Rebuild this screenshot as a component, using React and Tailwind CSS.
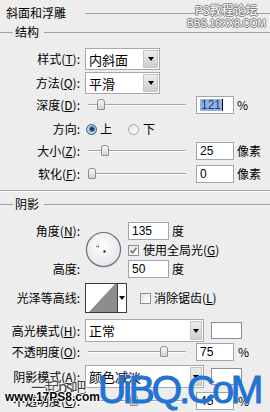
import React from 'react';

function Label({ children }) {
  return (
    <div className="w-[80px] shrink-0 whitespace-nowrap text-right text-[12px] leading-none">{children}</div>
  );
}

function Slider({ thumb }) {
  return (
    <div className="relative ml-[8px] h-[12px] w-[98px] shrink-0">
      <div className="absolute inset-x-0 top-[5px] h-[2px] border-t border-b border-[#a3a3a3] border-b-[#ffffff]" />
      <div className={`absolute top-0 h-[11px] w-[8px] rounded-t-[3px] rounded-b-[1px] border border-[#8e8e8e] bg-gradient-to-b from-[#fbfbfb] to-[#d2d2d2] ${thumb}`} />
    </div>
  );
}

function NumInput({ children, className }) {
  return (
    <div className={`flex h-[18px] shrink-0 items-center border border-[#a0a6ad] bg-white pl-[3px] font-['Liberation_Sans',sans-serif] text-[12px] leading-none ${className}`}>
      {children}
    </div>
  );
}

function Select({ text, width, arrow }) {
  return (
    <div className={`ml-[5px] flex h-full shrink-0 border border-[#a9a9a9] bg-white ${width}`}>
      <div className="flex flex-1 items-center pl-[3px] text-[13px] leading-none">{text}</div>
      <div className={`m-[1px] flex items-center justify-center border border-[#c6c6c6] bg-gradient-to-b from-[#ededed] to-[#cfcfcf] ${arrow}`}>
        <div className="h-0 w-0 border-x-[3.5px] border-t-[4px] border-x-transparent border-t-black" />
      </div>
    </div>
  );
}

function Radio({ checked }) {
  return checked ? (
    <div className="flex h-[11px] w-[11px] shrink-0 items-center justify-center rounded-full border border-[#3b5874] bg-[#b9d0e4]">
      <div className="h-[6px] w-[6px] rounded-full border border-[#5b88b0] bg-[#1d3a56]" />
    </div>
  ) : (
    <div className="h-[11px] w-[11px] shrink-0 rounded-full border border-[#a2a2a2] bg-gradient-to-br from-[#e2e2e2] to-[#ffffff]" />
  );
}

function Check({ checked }) {
  return (
    <div className="flex h-[11px] w-[11px] shrink-0 items-center justify-center border border-[#8f8f8f] bg-gradient-to-br from-[#e4e4e4] to-white">
      {checked && (
        <svg width="9" height="9" viewBox="0 0 9 9">
          <path d="M1.5 4.5 L3.5 6.8 L7.5 1.8" fill="none" stroke="#6c7890" strokeWidth="1.6" />
        </svg>
      )}
    </div>
  );
}

const outlineGray = "[text-shadow:1px_0_0_#7c7c7c,-1px_0_0_#7c7c7c,0_1px_0_#7c7c7c,0_-1px_0_#7c7c7c]";

export default function App() {
  return (
    <div className="relative flex h-[412px] w-[270px] flex-col overflow-hidden bg-[#ededed] font-['Noto_Sans_CJK_SC',sans-serif] text-black">
      {/* header */}
      <div className="flex h-[26px] shrink-0 items-center">
        <span className="ml-[6px] text-[12px] leading-none">斜面和浮雕</span>
        <div className="ml-[19px] flex-1 border-t border-[#a2a2a2]" />
      </div>

      {/* 结构 group */}
      <div className="flex h-[12px] shrink-0 items-center">
        <div className="w-[13px] border-t border-[#a2a2a2]" />
        <span className="pl-[2px] pr-[5px] text-[12px] leading-none">结构</span>
        <div className="flex-1 border-t border-[#a2a2a2]" />
      </div>

      <div className="mt-[10px] flex h-[22px] shrink-0 items-center">
        <Label>样式(<u>T</u>):</Label>
        <Select text="内斜面" width="w-[75px]" arrow="w-[15px]" />
      </div>
      <div className="mt-[2px] flex h-[22px] shrink-0 items-center">
        <Label>方法(<u>Q</u>):</Label>
        <Select text="平滑" width="w-[75px]" arrow="w-[15px]" />
      </div>
      <div className="mt-[2px] flex h-[18px] shrink-0 items-center">
        <Label>深度(<u>D</u>):</Label>
        <Slider thumb="left-[9px]" />
        <NumInput className="ml-[10px] w-[38px]">
          <span className="bg-[#93b2e4] px-[1px] text-[#1c3a80]">121</span>
          <span className="h-[12px] w-px bg-black" />
        </NumInput>
        <span className="ml-[3px] text-[12px] leading-none">%</span>
      </div>
      <div className="mt-[4px] flex h-[22px] shrink-0 items-center">
        <Label>方向:</Label>
        <div className="ml-[6px]"><Radio checked /></div>
        <span className="ml-[3px] text-[12px] leading-none">上</span>
        <div className="ml-[16px]"><Radio /></div>
        <span className="ml-[4px] text-[12px] leading-none">下</span>
      </div>
      <div className="mt-[2px] flex h-[18px] shrink-0 items-center">
        <Label>大小(<u>Z</u>):</Label>
        <Slider thumb="left-[13px]" />
        <NumInput className="ml-[10px] w-[38px]">25</NumInput>
        <span className="ml-[3px] text-[12px] leading-none">像素</span>
      </div>
      <div className="mt-[5px] flex h-[18px] shrink-0 items-center">
        <Label>软化(<u>F</u>):</Label>
        <Slider thumb="left-0" />
        <NumInput className="ml-[10px] w-[38px]">0</NumInput>
        <span className="ml-[3px] text-[12px] leading-none">像素</span>
      </div>

      <div className="mt-[7px] h-[2px] shrink-0 border-t border-b border-[#a2a2a2] border-b-white" />

      {/* 阴影 group */}
      <div className="mt-[6px] flex h-[12px] shrink-0 items-center">
        <div className="w-[13px] border-t border-[#a2a2a2]" />
        <span className="pl-[2px] pr-[5px] text-[12px] leading-none">阴影</span>
        <div className="flex-1 border-t border-[#a2a2a2]" />
      </div>

      <div className="mt-[12px] flex h-[56px] shrink-0">
        <div className="flex w-[80px] shrink-0 flex-col justify-between">
          <div className="flex h-[18px] items-center justify-end text-[12px] leading-none">角度(<u>N</u>):</div>
          <div className="flex h-[18px] items-center justify-end text-[12px] leading-none">高度:</div>
        </div>
        <svg className="ml-[5px] mt-[9px] shrink-0" width="37" height="37" viewBox="0 0 37 37">
          <defs>
            <radialGradient id="dial" cx="45%" cy="40%" r="65%">
              <stop offset="0" stopColor="#ffffff" />
              <stop offset="1" stopColor="#e3e3ea" />
            </radialGradient>
          </defs>
          <circle cx="18.5" cy="19" r="17" fill="none" stroke="#cfcfd6" strokeWidth="1.5" />
          <circle cx="18.5" cy="18.5" r="17" fill="url(#dial)" stroke="#6f6f7a" strokeWidth="1.2" />
          <path d="M11 15.5 H15 M13 13.5 V17.5" stroke="#555" strokeWidth="1" strokeDasharray="1 1" />
          <rect x="18.5" y="19.5" width="2" height="2" fill="#000" />
        </svg>
        <div className="ml-[6px] flex flex-col">
          <div className="flex h-[18px] items-center">
            <NumInput className="w-[41px]">135</NumInput>
            <span className="ml-[3px] text-[12px] leading-none">度</span>
          </div>
          <div className="flex h-[20px] items-center">
            <Check checked />
            <span className="ml-[4px] text-[12px] leading-none">使用全局光(<u>G</u>)</span>
          </div>
          <div className="flex h-[18px] items-center">
            <NumInput className="w-[41px]">50</NumInput>
            <span className="ml-[3px] text-[12px] leading-none">度</span>
          </div>
        </div>
      </div>

      <div className="mt-[5px] flex h-[30px] shrink-0 items-center">
        <Label>光泽等高线:</Label>
        <div className="ml-[5px] flex h-[30px] w-[42px] shrink-0 border border-[#3a3a3a] bg-white">
          <svg className="shrink-0" width="31" height="28" viewBox="0 0 31 28">
            <polygon points="3,28 29,0 31,0 31,28" fill="#8d8d8d" />
          </svg>
          <div className="flex flex-1 items-center justify-center border-l border-[#3a3a3a]">
            <div className="h-0 w-0 border-x-[3px] border-t-[4px] border-x-transparent border-t-black" />
          </div>
        </div>
        <div className="ml-[13px]"><Check /></div>
        <span className="ml-[3px] text-[12px] leading-none">消除锯齿(<u>L</u>)</span>
      </div>

      <div className="mt-[6px] flex h-[23px] shrink-0 items-center">
        <Label>高光模式(<u>H</u>):</Label>
        <Select text="正常" width="w-[119px]" arrow="w-[12px]" />
        <div className="ml-[7px] h-[17px] w-[31px] shrink-0 border border-[#8d8d8d] bg-white" />
      </div>
      <div className="mt-[1px] flex h-[18px] shrink-0 items-center">
        <Label>不透明度(<u>O</u>):</Label>
        <Slider thumb="left-[72px]" />
        <NumInput className="ml-[10px] w-[38px]">75</NumInput>
        <span className="ml-[4px] text-[12px] leading-none">%</span>
      </div>
      <div className="mt-[4px] flex h-[23px] shrink-0 items-center">
        <Label>阴影模式(<u>A</u>):</Label>
        <Select text="颜色减淡" width="w-[119px]" arrow="w-[12px]" />
        <div className="ml-[7px] h-[17px] w-[31px] shrink-0 border border-[#8d8d8d] bg-white" />
      </div>
      <div className="mt-[4px] flex h-[18px] shrink-0 items-center">
        <Label>不透明度(<u>C</u>):</Label>
        <Slider thumb="left-[42px]" />
        <NumInput className="ml-[10px] w-[38px]">45</NumInput>
        <span className="ml-[4px] text-[12px] leading-none">%</span>
      </div>

      {/* watermarks */}
      <div className={`absolute left-[195px] top-[4px] text-[12px] leading-none text-white ${outlineGray}`}>PS教程论坛</div>
      <div className={`absolute left-[187px] top-[19px] font-['Liberation_Sans',sans-serif] text-[10px] leading-none text-white ${outlineGray}`}>BBS.16XX8.COM</div>
      <div className="absolute left-[31px] top-[379px] text-[15px] leading-none tracking-[-1.5px] text-[#444444] [text-shadow:0_0_2px_#ffffff,0_0_2px_#ffffff]">一起ps吧</div>
      <div className="absolute left-[5px] top-[391px] font-['Liberation_Sans',sans-serif] text-[12px] font-bold leading-none text-black [text-shadow:1px_0_0_#fff,-1px_0_0_#fff,0_1px_0_#fff,0_-1px_0_#fff]">www.17PS8.com</div>
      <div className="absolute left-[98px] top-[370px] font-['Liberation_Sans',sans-serif] text-[39px] leading-none tracking-[-3px] text-[#2273d2] [-webkit-text-stroke:1px_#2273d2]">UiBQ.CoM</div>
    </div>
  );
}
